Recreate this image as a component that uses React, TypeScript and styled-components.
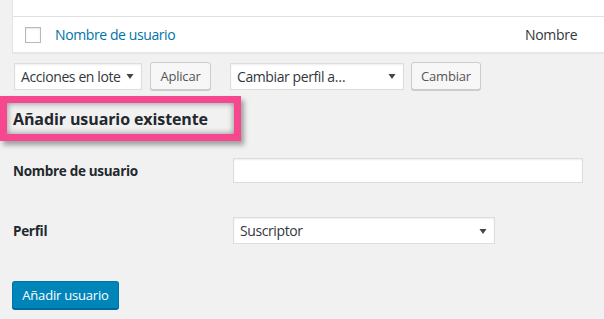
import React from "react";
import styled, { createGlobalStyle } from "styled-components";

const GlobalStyle = createGlobalStyle`
  html, body {
    margin: 0;
    padding: 0;
    background: #f1f1f1;
    overflow: hidden;
  }
  body {
    font-family: "Open Sans", "Noto Sans", sans-serif;
    color: #23282d;
    font-size: 13px;
  }
`;

const Page = styled.div`
  width: 604px;
  height: 319px;
  overflow: hidden;
`;

const Table = styled.div`
  margin-left: 12px;
  margin-right: -20px;
  background: #fff;
  border: 1px solid #e5e5e5;
  border-top: none;
  box-shadow: 0 1px 1px rgba(0, 0, 0, 0.04);
`;

const HeadTail = styled.div`
  height: 16px;
  border-bottom: 1px solid #e1e1e1;
`;

const Row = styled.div`
  display: flex;
  align-items: center;
  height: 35px;
`;

const CheckCell = styled.div`
  width: 42px;
  display: flex;
  justify-content: flex-end;
`;

const Checkbox = styled.span`
  display: block;
  width: 14px;
  height: 14px;
  border: 1px solid #b4b9be;
  background: #fff;
  box-shadow: inset 0 1px 2px rgba(0, 0, 0, 0.1);
  margin-right: 14px;
`;

const UserLink = styled.a`
  flex: 1;
  color: #0073aa;
  font-size: 14px;
  letter-spacing: -0.4px;
  text-decoration: none;
`;

const NameCol = styled.div`
  width: 98px;
  font-size: 14px;
  letter-spacing: -0.3px;
  color: #32373c;
`;

const Toolbar = styled.div`
  display: flex;
  align-items: center;
  margin: 9px 0 0 14px;
  height: 28px;
`;

const FakeSelect = styled.div<{ $w: number; $h?: number }>`
  box-sizing: border-box;
  width: ${(p) => p.$w}px;
  height: ${(p) => p.$h ?? 27}px;
  display: flex;
  align-items: center;
  justify-content: space-between;
  padding: 0 7px 0 6px;
  background: #fff;
  border: 1px solid #ddd;
  box-shadow: inset 0 1px 2px rgba(0, 0, 0, 0.07);
  font-size: 14px;
  letter-spacing: -0.4px;
  white-space: nowrap;
  color: #32373c;
`;

const Button = styled.button<{ $w: number }>`
  box-sizing: border-box;
  width: ${(p) => p.$w}px;
  height: 28px;
  background: #f7f7f7;
  border: 1px solid #ccc;
  border-radius: 3px;
  box-shadow: 0 1px 0 #ccc;
  color: #555;
  font-family: inherit;
  font-size: 13px;
  letter-spacing: -0.2px;
  padding: 0;
  margin-bottom: 1px;
`;

const Gap = styled.span<{ $w: number }>`
  display: inline-block;
  width: ${(p) => p.$w}px;
`;

const Highlight = styled.div`
  box-sizing: border-box;
  margin-top: 6px;
  width: 241px;
  height: 45px;
  border: 7px solid #f5488e;
  box-shadow: inset 0 0 6px rgba(0, 0, 0, 0.45), 3px 4px 5px rgba(0, 0, 0, 0.35);
  display: flex;
  align-items: center;
  padding-left: 6px;
`;

const Heading = styled.h2`
  margin: 0;
  font-size: 16px;
  font-weight: 700;
  letter-spacing: -0.1px;
  color: #23282d;
`;

const FormRow = styled.div<{ $top: number }>`
  display: grid;
  grid-template-columns: 220px auto;
  align-items: center;
  margin-top: ${(p) => p.$top}px;
  padding-left: 13px;
`;

const Label = styled.label`
  font-size: 13.5px;
  font-weight: 700;
  letter-spacing: -0.3px;
  color: #23282d;
`;

const TextInput = styled.input`
  box-sizing: border-box;
  width: 350px;
  height: 25px;
  border: 1px solid #ddd;
  background: #fff;
  box-shadow: inset 0 1px 2px rgba(0, 0, 0, 0.07);
  outline: none;
  margin: 0;
`;

const Primary = styled.button`
  margin: 37px 0 0 12px;
  box-sizing: border-box;
  width: 107px;
  height: 28px;
  background: #0085ba;
  border: 1px solid #0073aa;
  border-bottom-color: #006799;
  border-radius: 3px;
  box-shadow: 0 1px 0 #006799;
  color: #fff;
  font-family: inherit;
  font-size: 13px;
  letter-spacing: -0.2px;
  padding: 0;
`;

function Arrow() {
  return (
    <svg width="8" height="8" viewBox="0 0 8 8">
      <path d="M0.5 2 L7.5 2 L4 7 Z" fill="#444" />
    </svg>
  );
}

export default function App() {
  return (
    <Page>
      <GlobalStyle />
      <Table>
        <HeadTail />
        <Row>
          <CheckCell>
            <Checkbox />
          </CheckCell>
          <UserLink href="#">Nombre de usuario</UserLink>
          <NameCol>Nombre</NameCol>
        </Row>
      </Table>
      <Toolbar>
        <FakeSelect $w={128}>
          <span>Acciones en lote</span>
          <Arrow />
        </FakeSelect>
        <Gap $w={8} />
        <Button $w={61}>Aplicar</Button>
        <Gap $w={19} />
        <FakeSelect $w={174}>
          <span>Cambiar perfil a…</span>
          <Arrow />
        </FakeSelect>
        <Gap $w={7} />
        <Button $w={70}>Cambiar</Button>
      </Toolbar>
      <Highlight>
        <Heading>Añadir usuario existente</Heading>
      </Highlight>
      <FormRow $top={17}>
        <Label>Nombre de usuario</Label>
        <TextInput type="text" />
      </FormRow>
      <FormRow $top={34}>
        <Label>Perfil</Label>
        <FakeSelect $w={262} $h={27}>
          <span>Suscriptor</span>
          <Arrow />
        </FakeSelect>
      </FormRow>
      <Primary>Añadir usuario</Primary>
    </Page>
  );
}
